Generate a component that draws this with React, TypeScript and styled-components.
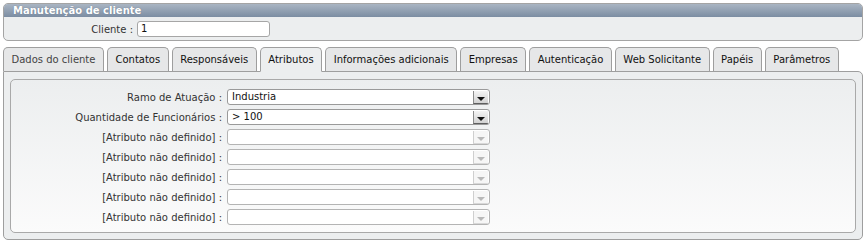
import styled, { createGlobalStyle } from 'styled-components';

const GlobalStyle = createGlobalStyle`
  body {
    margin: 0;
    background: #fff;
    font-family: "DejaVu Sans", Verdana, sans-serif;
    font-size: 10px;
    color: #222;
  }
`;

const Page = styled.div`
  padding: 3px 4px 2px 3px;
`;

const Panel = styled.div`
  border: 1px solid #a4a4a4;
  border-radius: 5px;
  background: #eceeef;
  overflow: hidden;
`;

const PanelHeader = styled.div`
  height: 13px;
  line-height: 13px;
  padding-left: 9px;
  background: linear-gradient(#a9b5c3, #7c8da2);
  color: #fff;
  font-weight: bold;
  text-shadow: 0 0 1px #5d6d80;
`;

const FieldRow = styled.div`
  display: flex;
  align-items: center;
  gap: 4px;
  padding: 4px 0 3px 0;
`;

const Label = styled.label<{ $width: number }>`
  width: ${p => p.$width}px;
  text-align: right;
  color: #333;
  white-space: nowrap;
`;

const TextInput = styled.div`
  width: 128px;
  height: 14px;
  line-height: 14px;
  padding-left: 3px;
  border: 1px solid #a6a6a6;
  border-radius: 3px;
  background: #fff;
  color: #111;
`;

const TabStrip = styled.div`
  display: flex;
  gap: 3px;
  margin-top: 6px;
  position: relative;
  z-index: 1;
`;

const Tab = styled.div<{ $active?: boolean; $muted?: boolean }>`
  height: 23px;
  line-height: 24px;
  padding: 0 7.5px;
  border: 1px solid #9e9e9e;
  border-bottom: ${p => (p.$active ? '1px solid #eceeef' : 'none')};
  border-radius: 5px 5px 0 0;
  background: ${p => (p.$active ? '#eceeef' : '#e6e7e8')};
  color: ${p => (p.$muted ? '#444' : '#111')};
  margin-bottom: ${p => (p.$active ? '-1px' : '0')};
  white-space: nowrap;
`;

const TabBody = styled.div`
  border: 1px solid #9e9e9e;
  border-radius: 0 5px 5px 5px;
  background: #eceeef;
  padding: 7px 6px 6px 6px;
`;

const Fieldset = styled.div`
  border: 1px solid #a9a9a9;
  border-radius: 5px;
  background: linear-gradient(#eceeef, #fbfbfb);
  padding: 9px 0 7px 0;
  display: flex;
  flex-direction: column;
  gap: 4px;
`;

const SelectRow = styled.div`
  display: flex;
  align-items: center;
  gap: 5px;
  height: 16px;
`;

const SelectBox = styled.div<{ $disabled?: boolean }>`
  width: 261px;
  height: 14px;
  border: 1px solid ${p => (p.$disabled ? '#b4b4b4' : '#9a9a9a')};
  border-radius: 3px;
  background: #fff;
  display: flex;
  align-items: stretch;
  overflow: hidden;
`;

const SelectValue = styled.span`
  flex: 1;
  line-height: 14px;
  padding-left: 4px;
  color: #111;
`;

const ArrowButton = styled.span<{ $disabled?: boolean }>`
  width: 15px;
  margin: 1px 1px 0 0;
  border-left: 1px solid ${p => (p.$disabled ? '#cfcfcf' : '#8a8a8a')};
  border-bottom: 1px solid ${p => (p.$disabled ? '#d8d8d8' : '#5e5e5e')};
  background: ${p => (p.$disabled ? '#f6f6f6' : 'linear-gradient(#f4f4f4, #d2d2d2)')};
  display: flex;
  align-items: flex-end;
  justify-content: center;
  padding-bottom: 2px;
  box-sizing: border-box;
`;

const Arrow = styled.span<{ $disabled?: boolean }>`
  width: 0;
  height: 0;
  border-left: 4px solid transparent;
  border-right: 4px solid transparent;
  border-top: 4px solid ${p => (p.$disabled ? '#b8b8b8' : '#111')};
`;

const tabs = [
  'Dados do cliente',
  'Contatos',
  'Responsáveis',
  'Atributos',
  'Informações adicionais',
  'Empresas',
  'Autenticação',
  'Web Solicitante',
  'Papéis',
  'Parâmetros',
];

const attrs: { label: string; value?: string }[] = [
  { label: 'Ramo de Atuação :', value: 'Industria' },
  { label: 'Quantidade de Funcionários :', value: '> 100' },
  { label: '[Atributo não definido] :' },
  { label: '[Atributo não definido] :' },
  { label: '[Atributo não definido] :' },
  { label: '[Atributo não definido] :' },
  { label: '[Atributo não definido] :' },
];

export default function App() {
  return (
    <Page>
      <GlobalStyle />
      <Panel>
        <PanelHeader>Manutenção de cliente</PanelHeader>
        <FieldRow>
          <Label $width={129}>Cliente :</Label>
          <TextInput>1</TextInput>
        </FieldRow>
      </Panel>
      <TabStrip>
        {tabs.map((t, i) => (
          <Tab key={t} $active={t === 'Atributos'} $muted={i === 0}>{t}</Tab>
        ))}
      </TabStrip>
      <TabBody>
        <Fieldset>
          {attrs.map((a, i) => {
            const disabled = !a.value;
            return (
              <SelectRow key={i}>
                <Label $width={211}>{a.label}</Label>
                <SelectBox $disabled={disabled}>
                  <SelectValue>{a.value}</SelectValue>
                  <ArrowButton $disabled={disabled}>
                    <Arrow $disabled={disabled} />
                  </ArrowButton>
                </SelectBox>
              </SelectRow>
            );
          })}
        </Fieldset>
      </TabBody>
    </Page>
  );
}
